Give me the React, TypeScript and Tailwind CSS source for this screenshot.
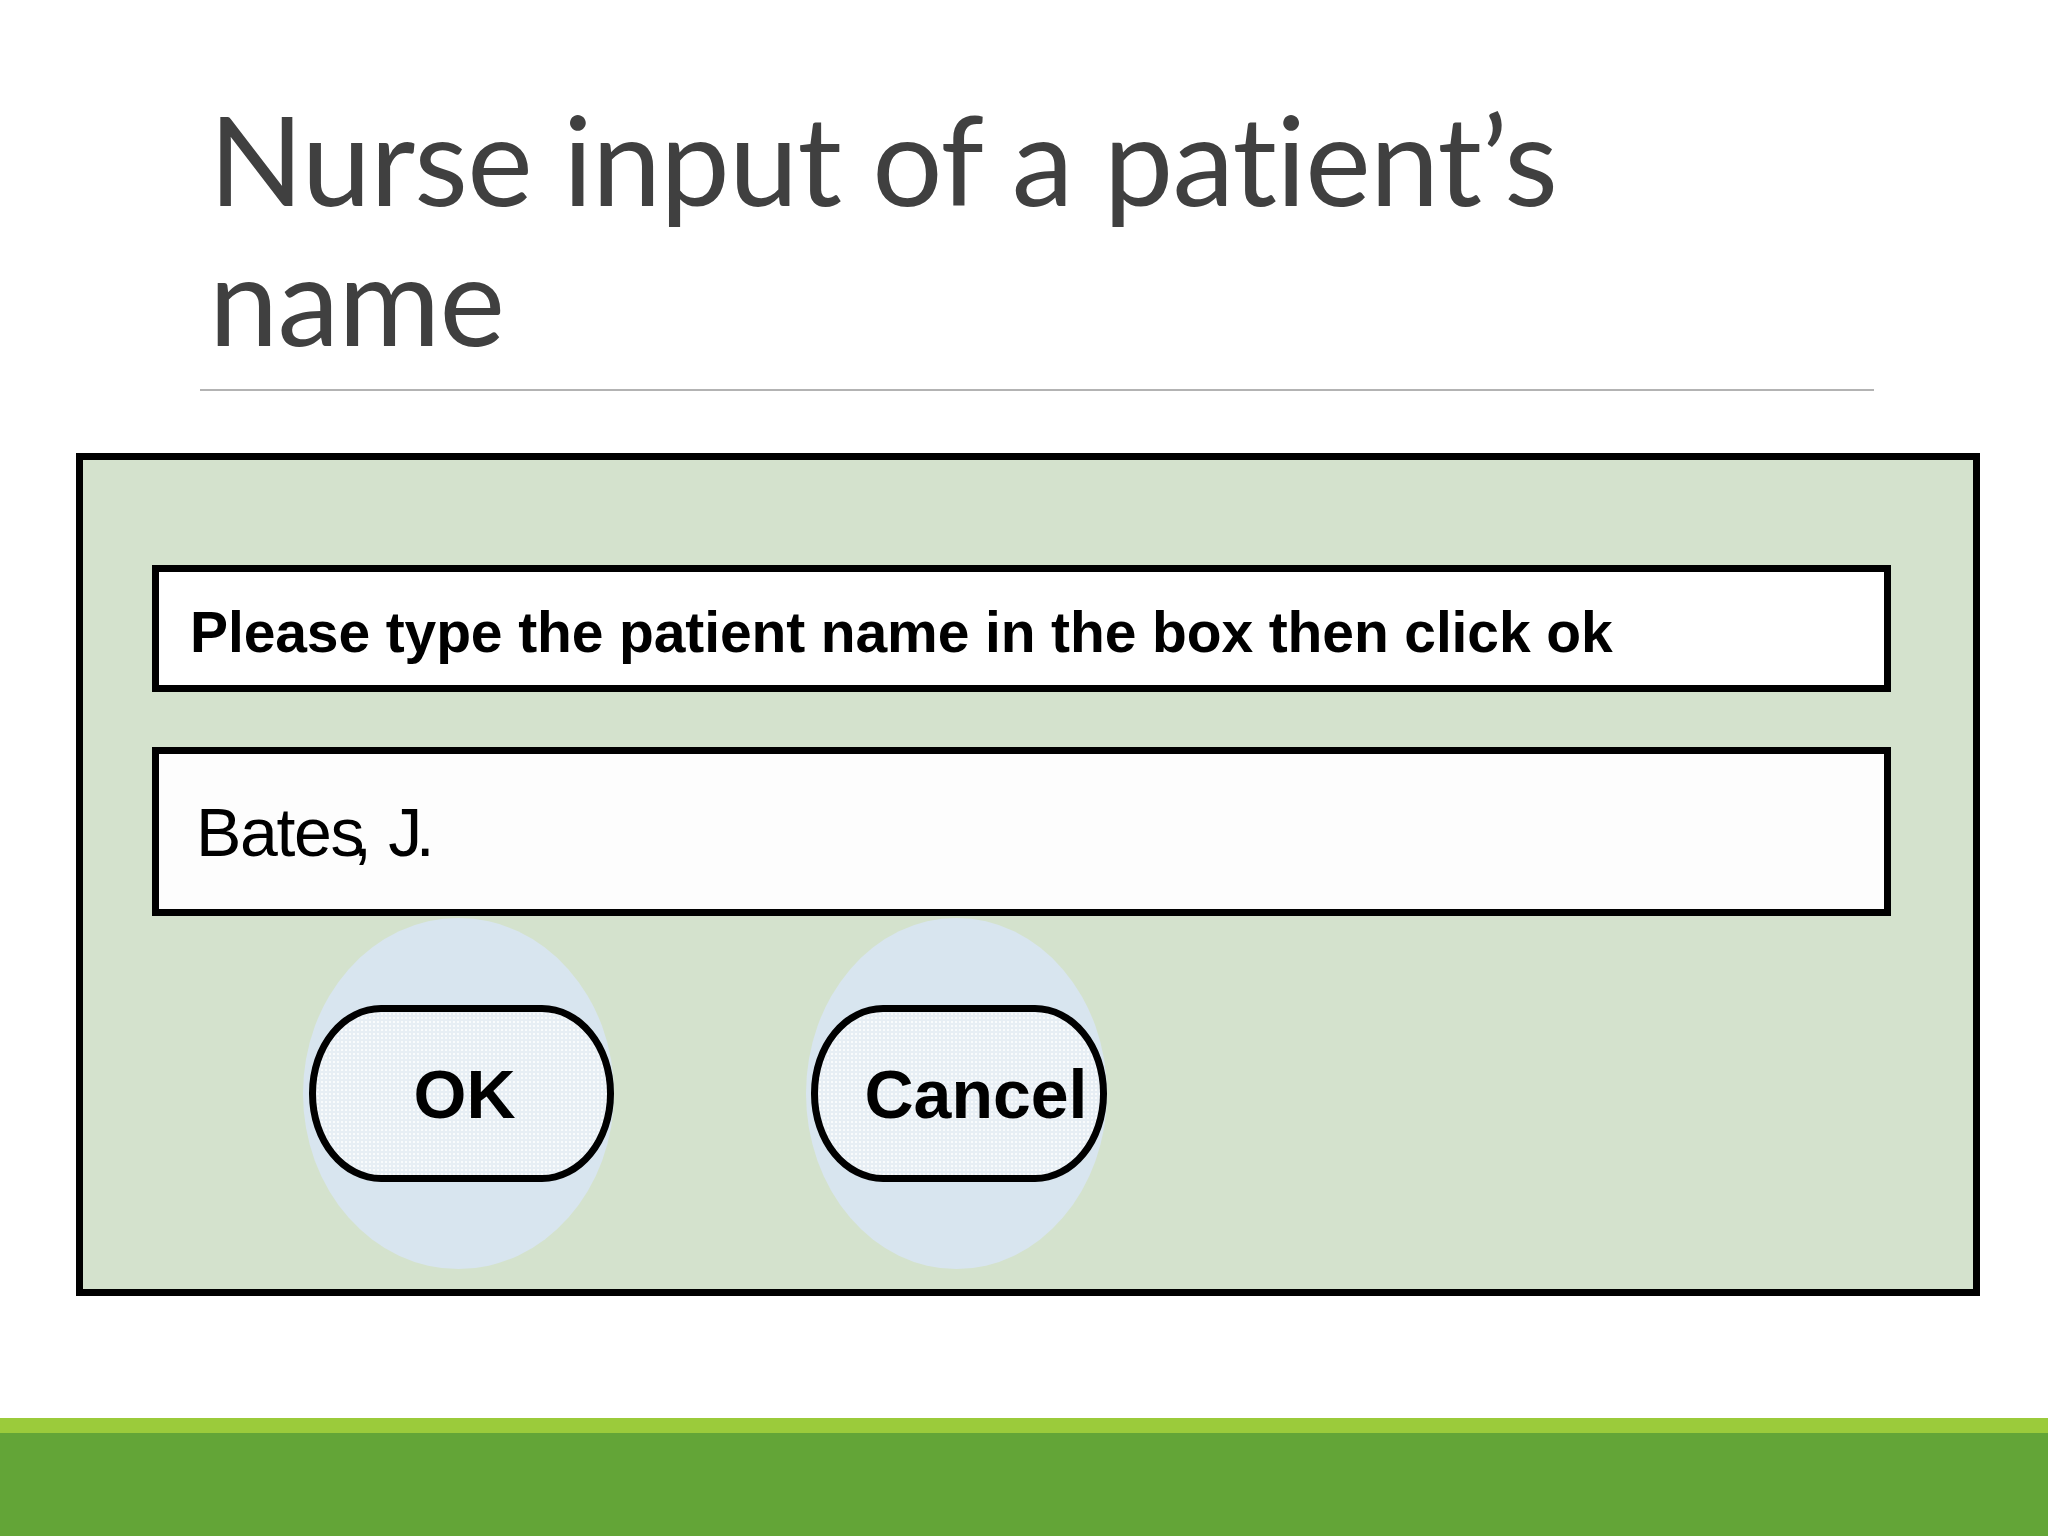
export default function App() {
  const dots =
    "bg-[radial-gradient(circle,rgba(255,255,255,0.75)_1px,transparent_1.3px)] bg-[length:4px_4px]";

  return (
    <div className="w-[2048px] h-[1536px] overflow-hidden bg-white flex flex-col">
      {/* slide title */}
      <h1 className="pl-[209px] pt-[88px] text-[124px] leading-[140px] font-normal tracking-[-0.006em] [font-variant-ligatures:none] text-[#404040] font-['Lato','Liberation_Sans',sans-serif]">
        Nurse input of a patient’s
        <br />
        name
      </h1>
      <div className="mt-[21px] ml-[200px] w-[1674px] h-[2px] bg-[#b3b3b3]" />

      {/* dialog mockup */}
      <div className="mt-[62px] ml-[76px] w-[1904px] h-[843px] border-[7px] border-black bg-[#d4e2cd] flex flex-col font-['Liberation_Sans',Arial,sans-serif] text-black">
        <div className="mt-[105px] ml-[69px] w-[1739px] h-[127px] border-[7px] border-black bg-white flex items-center pl-[31px] pt-[8px]">
          <span className="text-[57px] font-bold leading-none tracking-[-0.002em]">
            Please type the patient name in the box then click ok
          </span>
        </div>

        <div className="mt-[55px] ml-[69px] w-[1739px] h-[169px] border-[7px] border-black bg-[#fdfdfd] flex items-center pl-[37px]">
          <span className="text-[68px] leading-none tracking-[-0.02em] whitespace-pre">
            Bates<span className="-ml-[10px]">,</span> J<span className="-ml-[5px]">.</span>
          </span>
        </div>

        <div className="mt-[2px] ml-[220px] flex gap-[192px]">
          <div className="w-[311px] h-[351px] rounded-[50%] bg-[#d8e5ef] flex items-center pl-[6px]">
            <div
              className={`w-[305px] h-[177px] border-[7px] border-black rounded-[72px/88px] bg-[#e7eef4] ${dots} flex items-center justify-center pl-[6px]`}
            >
              <span className="text-[68px] font-bold leading-none">OK</span>
            </div>
          </div>
          <div className="w-[301px] h-[351px] rounded-[50%] bg-[#d8e5ef] flex items-center pl-[5px]">
            <div
              className={`w-[296px] h-[177px] border-[7px] border-black rounded-[72px/88px] bg-[#e7eef4] ${dots} flex items-center justify-center pl-[34px]`}
            >
              <span className="text-[68px] font-bold leading-none">Cancel</span>
            </div>
          </div>
        </div>
      </div>

      {/* footer bands */}
      <div className="mt-[122px] h-[15px] bg-[#9bcb3b]" />
      <div className="h-[103px] bg-[#63a537]" />
    </div>
  );
}
